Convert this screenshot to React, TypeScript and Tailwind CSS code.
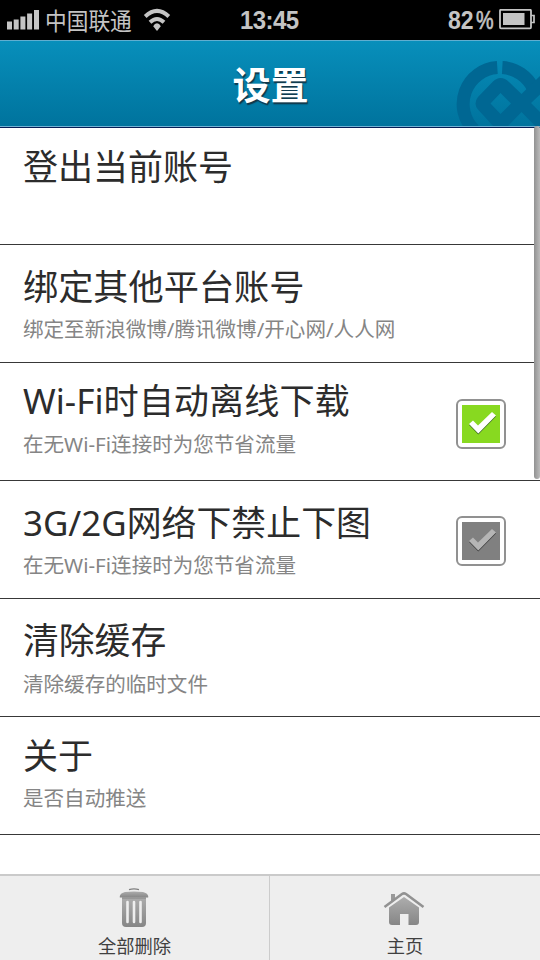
type Row = { title: string; sub?: string; pad: string; gap: string; size: string; check?: 'on' | 'off' };

const rows: Row[] = [
  { title: '登出当前账号', pad: 'pt-[18px]', gap: '', size: 'text-[35px]' },
  { title: '绑定其他平台账号', sub: '绑定至新浪微博/腾讯微博/开心网/人人网', pad: 'pt-[21px]', gap: 'mt-[8px]', size: 'text-[35.2px]' },
  { title: 'Wi-Fi时自动离线下载', sub: '在无Wi-Fi连接时为您节省流量', pad: 'pt-[17px]', gap: 'mt-[9px]', size: 'text-[35.2px]', check: 'on' },
  { title: '3G/2G网络下禁止下图', sub: '在无Wi-Fi连接时为您节省流量', pad: 'pt-[21px]', gap: 'mt-[8px]', size: 'text-[34.9px]', check: 'off' },
  { title: '清除缓存', sub: '清除缓存的临时文件', pad: 'pt-[21px]', gap: 'mt-[9px]', size: 'text-[35.8px]' },
  { title: '关于', sub: '是否自动推送', pad: 'pt-[18px]', gap: 'mt-[8px]', size: 'text-[35px]' },
];

function StatusBar() {
  return (
    <div className="flex h-10 shrink-0 items-center bg-black text-[#c4c4c4]">
      <svg className="ml-[7px] shrink-0" width="33" height="21" fill="#c4c4c4">
        <rect x="0" y="11.500" width="5" height="8" />
        <rect x="6.7" y="9.500" width="5" height="10" />
        <rect x="13.4" y="6.500" width="5" height="13" />
        <rect x="20.1" y="3.500" width="5" height="16" />
        <rect x="27" y="0" width="5" height="19.5" />
      </svg>
      <span className='ml-[5px] w-[90px] origin-center scale-y-[1.1] whitespace-nowrap font-["Noto_Sans_CJK_SC",sans-serif] text-[21.7px] leading-10'>中国联通</span>
      <svg className="ml-[8px] shrink-0" width="28" height="24" viewBox="0 0 28 24" fill="none" stroke="#c4c4c4" strokeWidth="4">
        <path d="M2.200 8.500Q14 -2.600 25.800 8.500" />
        <path d="M7 14.200Q14 7.800 21 14.200" />
        <path d="M14 15.200Q16.300 15.200 17.800 18.200L14 23L10.200 18.200Q11.700 15.200 14 15.200Z" fill="#c4c4c4" stroke="none" />
      </svg>
      <span className='ml-[69px] w-[60px] origin-left scale-y-[1.1] whitespace-nowrap font-["Liberation_Sans",sans-serif] text-[24px] font-bold leading-10 tracking-[-0.6px]'>13:45</span>
      <span className='ml-[148px] flex w-[51px] scale-y-[1.1] items-center gap-[2.500px] whitespace-nowrap font-["Liberation_Sans",sans-serif] text-[23px] font-bold leading-10'>
        <span>82</span>
        <span className="origin-left scale-x-[0.86] font-normal [-webkit-text-stroke:0.6px_#c4c4c4]">%</span>
      </span>
      <svg className="shrink-0" width="37" height="22" fill="none" stroke="#c4c4c4">
        <rect x="1" y="0.800" width="31" height="18.500" rx="1" strokeWidth="1.800" />
        <rect x="4" y="4" width="21.500" height="12" fill="#c4c4c4" stroke="none" />
        <path d="M32 6.500H35V13.500H32" strokeWidth="1.700" />
      </svg>
    </div>
  );
}

function Header() {
  return (
    <header className="relative flex h-[88px] shrink-0 items-center justify-center overflow-hidden border-b border-t border-b-[#061d55] border-t-[#60aed0] bg-gradient-to-b from-[#088fbb] to-[#00739d]">
      <svg className="absolute right-0 top-0" width="100" height="86" viewBox="440 41 100 86">
        <g fill="none" stroke="#006793" strokeWidth="13">
          <path d="M497.300 67.600A36.500 36.500 0 0 0 474 130" />
          <path d="M502.300 67.600A36.500 36.500 0 0 1 533.500 89" />
        </g>
        <path fill="#006793" fillRule="evenodd" d="M500.500 78Q505 78 509 82L521.500 94L541 75V93.500L531 103L541 113V132L521.500 112L507 127H494L478 109.500Q473 103.500 478 97L493 81.500Q496.500 78 500.500 78ZM500.500 93L490.500 103.500L500.500 114L511 103.500Z" />
      </svg>
      <h1 className='relative top-[-1px] left-[0.5px] font-["Noto_Sans_CJK_SC",sans-serif] text-[38px] font-bold leading-[86px] text-white [text-shadow:1px_2px_1px_#12384a]'>设置</h1>
      <div className="absolute inset-x-0 bottom-0 h-px bg-[#72b2d4]" />
    </header>
  );
}

function Check({ on }: { on: boolean }) {
  return (
    <div className={`mr-[34px] flex size-[50px] shrink-0 items-center justify-center rounded-[6px] border-2 border-[#919191] bg-white ${on ? 'mt-[36px]' : 'mt-[35px]'}`}>
      <svg width="38" height="38" viewBox="0 0 38 38">
        <rect width="38" height="38" fill={on ? '#88d920' : '#808080'} />
        <path d="M7 19L11 15.500L16 20.500L30 7L34 10.500L16.300 28.500Z" transform="translate(0 .9)" fill={on ? '#3d6b25' : '#3d3d3d'} />
        <path d="M7 19L11 15.500L16 20.500L30 7L34 10.500L16.300 28.500Z" fill={on ? '#fff' : '#b5b5b5'} />
      </svg>
    </div>
  );
}

function Trash() {
  return (
    <svg width="30" height="40" viewBox="0 0 30 40">
      <defs>
        <linearGradient id="metal" x2="0" y2="1">
          <stop stopColor="#adadad" /><stop offset="1" stopColor="#868686" />
        </linearGradient>
      </defs>
      <path d="M10 1.600Q15 .3 20 1.600" fill="none" stroke="#808080" strokeWidth="1.300" />
      <path d="M.8 9.500V8Q1.500 5 6 4Q15 2.800 24 4Q28.500 5 29.200 8V9.500Z" fill="url(#metal)" />
      <path d="M3 9H27V35Q27 39 23 39H7Q3 39 3 35Z" fill="url(#metal)" />
      <path d="M3 10H27" stroke="#858585" />
      <path d="M8.500 14V34M15 14V34M21.500 14V34" stroke="#eee" strokeWidth="2.600" strokeLinecap="round" />
    </svg>
  );
}

function Home() {
  return (
    <svg width="42" height="36" viewBox="0 0 42 36">
      <path d="M8 3H12V8L8 11Z" fill="#999" />
      <path d="M1.500 16L19 3Q21 1.600 23 3L40.500 16" fill="none" stroke="#929292" strokeWidth="2.600" />
      <path d="M6 16.500L21 6L36 16.500V31Q36 34 33 34H25.500V23H17V34H9Q6 34 6 31Z" fill="url(#metal)" />
    </svg>
  );
}

export default function App() {
  return (
    <div className='relative flex h-[960px] w-[540px] flex-col overflow-hidden bg-white font-["Noto_Sans","Noto_Sans_CJK_SC",sans-serif]'>
      <StatusBar />
      <Header />
      <main className="flex-1">
        {rows.map((r, i) => (
          <section key={r.title} className={`flex justify-between border-b border-[#383838] ${i === 0 ? 'h-[117px]' : 'h-[118px]'}`}>
            <div className={`pl-[23px] ${r.pad}`}>
              <h2 className={`whitespace-nowrap leading-[41px] text-[#2c2c2c] ${r.size}`}>{r.title}</h2>
              {r.sub && <p className={`whitespace-nowrap text-[20.55px] leading-[29px] text-[#858585] ${r.gap}`}>{r.sub}</p>}
            </div>
            {r.check && <Check on={r.check === 'on'} />}
          </section>
        ))}
      </main>
      <footer className="grid h-[86px] shrink-0 grid-cols-2 border-t-2 border-[#cacaca] bg-[#eee] text-center text-[18.3px] text-[#404040]">
        <div className="flex flex-col items-center border-r border-[#ccc] pt-[12px]">
          <div className="pr-[2px]"><Trash /></div>
          <span className="mt-[4px] leading-[28px]">全部删除</span>
        </div>
        <div className="flex flex-col items-center pt-[15px]">
          <div className="pr-[2px]"><Home /></div>
          <span className="mt-[5px] leading-[28px]">主页</span>
        </div>
      </footer>
      <div className="absolute right-0 top-[126px] h-[353px] w-[6px] rounded-[3px] bg-gradient-to-r from-[#929292] to-[#bbb]" />
    </div>
  );
}
